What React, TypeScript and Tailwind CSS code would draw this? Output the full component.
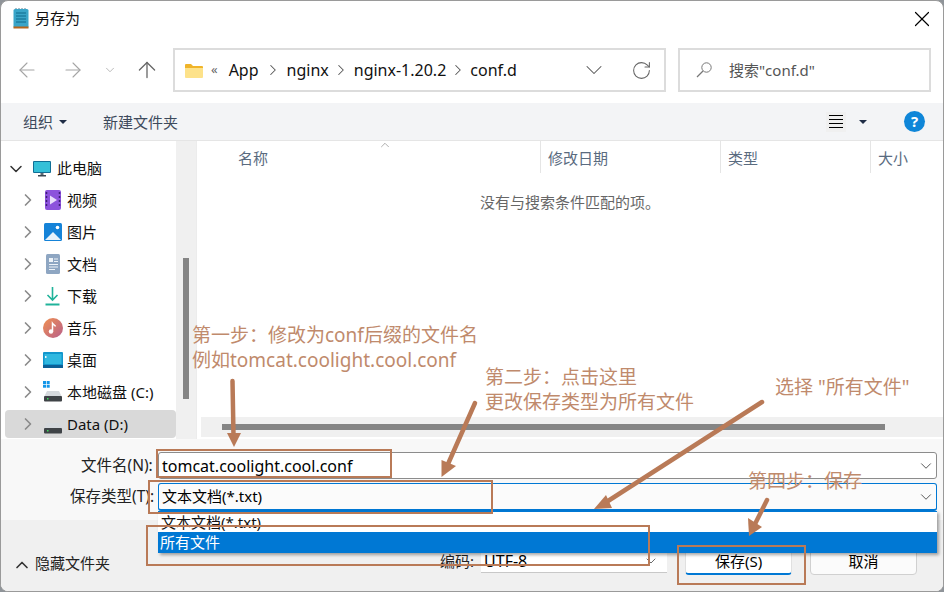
import { ArrowLeft, ArrowRight, ArrowUp, ChevronDown, ChevronRight, ChevronUp, RotateCw, X } from "lucide-react";
import type { ReactNode } from "react";

const font = { fontFamily: '"Noto Sans", "Noto Sans CJK SC", sans-serif' };

function NotepadIcon() {
  return (
    <svg width="16" height="21" viewBox="0 0 16 21">
      <rect x="0.5" y="1" width="15" height="19" rx="1.5" fill="#3aa5c8" />
      <rect x="0.5" y="18.5" width="15" height="2" fill="#b5651d" />
      <path d="M3 1V0M6 1V0M9 1V0M12 1V0" stroke="#5b7c8c" />
      <path d="M3 5h10M3 8h10M3 11h10M3 14h10" stroke="#0f6a8c" />
    </svg>
  );
}

function FolderIcon() {
  return (
    <svg width="18" height="15" viewBox="0 0 18 15">
      <path d="M0 2a1 1 0 0 1 1-1h5l2 2h9a1 1 0 0 1 1 1v10H0z" fill="#f0b429" />
      <path d="M0 5h18v9a1 1 0 0 1-1 1H1a1 1 0 0 1-1-1z" fill="#fde28a" />
    </svg>
  );
}

function SearchGlass() {
  return (
    <svg width="16" height="16" viewBox="0 0 16 16" fill="none" stroke="#777">
      <circle cx="10.5" cy="5.5" r="4.7" />
      <path d="M7 9L1 15" strokeWidth="1.2" />
    </svg>
  );
}

function PcIcon() {
  return (
    <svg width="18" height="16" viewBox="0 0 18 16">
      <rect x="0" y="0" width="18" height="12" rx="1" fill="#106f96" />
      <rect x="1" y="1" width="16" height="10" fill="#35c0d8" />
      <rect x="7.5" y="12" width="3" height="2" fill="#5e6b75" />
      <rect x="5" y="14" width="8" height="1.5" fill="#3b4650" />
    </svg>
  );
}

function VideoIcon() {
  return (
    <svg width="16" height="20" viewBox="0 0 16 20">
      <rect width="16" height="20" rx="2" fill="#8c52dc" />
      <path d="M5 5.5l7 4.5-7 4.5z" fill="#e8dcfb" />
      <path d="M1.5 2v16M14.5 2v16" stroke="#3e1e78" strokeWidth="1.5" strokeDasharray="2 2" />
    </svg>
  );
}

function PictureIcon() {
  return (
    <svg width="18" height="18" viewBox="0 0 18 18">
      <rect width="18" height="18" rx="1.5" fill="#1583d8" />
      <circle cx="13.5" cy="4.5" r="1.8" fill="#fff" />
      <path d="M1 17l8-8 8 8z" fill="#e6f2fb" />
    </svg>
  );
}

function DocIcon() {
  return (
    <svg width="14" height="20" viewBox="0 0 14 20">
      <rect width="14" height="20" rx="1.5" fill="#8ea6c2" />
      <rect x="3" y="4" width="4" height="4" fill="#eef3f8" />
      <path d="M8 5h4M8 7.5h4M3 10.5h9M3 13h9M3 15.5h6" stroke="#eef3f8" />
    </svg>
  );
}

function DownloadIcon() {
  return (
    <svg width="15" height="20" viewBox="0 0 15 20">
      <path d="M7.5 1v12M2.5 9l5 5 5-5" fill="none" stroke="#20b39a" strokeWidth="1.6" />
      <path d="M0.5 18.5h14" stroke="#20b39a" strokeWidth="2" />
    </svg>
  );
}

function MusicIcon() {
  return (
    <svg width="20" height="20" viewBox="0 0 20 20">
      <defs>
        <linearGradient id="music" x1="0" y1="0" x2="1" y2="1">
          <stop offset="0" stopColor="#f09050" />
          <stop offset="1" stopColor="#b8608c" />
        </linearGradient>
      </defs>
      <circle cx="10" cy="10" r="10" fill="url(#music)" />
      <circle cx="8" cy="13.5" r="2.2" fill="#fff" />
      <path d="M9.5 13.5V5.5c1 1.5 2.5 1.5 3 3" fill="none" stroke="#fff" strokeWidth="1.5" />
    </svg>
  );
}

function DesktopIcon() {
  return (
    <svg width="20" height="16" viewBox="0 0 20 16">
      <rect width="20" height="16" rx="1" fill="#1296cc" />
      <rect x="1.5" y="2" width="17" height="10" fill="#30b8e0" />
      <rect x="2" y="4" width="1.5" height="2" fill="#e8f7fc" />
      <rect y="13" width="20" height="3" fill="#0c5f96" />
    </svg>
  );
}

function DiskIcon({ windows }: { windows?: boolean }) {
  return (
    <svg width="20" height="22" viewBox="0 0 20 22">
      {windows && (
        <g fill="#1496e8">
          <rect x="0" y="0" width="3" height="3" />
          <rect x="3.7" y="0" width="3" height="3" />
          <rect x="0" y="3.7" width="3" height="3" />
          <rect x="3.7" y="3.7" width="3" height="3" />
        </g>
      )}
      <path d="M1 16l3-6h12l3 6z" fill="#d5d9dd" />
      <rect x="1" y="15" width="18" height="5.5" rx="1" fill="#3f4347" />
      <rect x="4" y="17" width="1.5" height="1.5" fill="#3ddc5c" />
    </svg>
  );
}

function NavRow({ icon, label, selected }: { icon: ReactNode; label: string; selected?: boolean }) {
  return (
    <div className={`flex items-center ${selected ? "ml-1 mt-0.5 h-7 rounded-sm bg-[#d9d9d9] pl-[13px]" : "h-8 pl-[17px]"}`}>
      <ChevronRight size={20} strokeWidth={2} className="text-[#8a8a8a]" />
      <span className="flex w-[29px] shrink-0 justify-center">{icon}</span>
      <span className="text-[15px] text-[#111]">{label}</span>
    </div>
  );
}

function Dropdown({ value, focused, big }: { value: string; focused?: boolean; big?: boolean }) {
  return (
    <div
      className={`flex items-center justify-between rounded-[3px] border pl-[3px] pr-[1px] ${
        focused ? "h-[28px] border-[#0078d4] border-b-2 bg-[#fbfbfb]" : "h-[27px] border-[#8c8c8c] bg-white"
      }`}
    >
      <span className={`${big ? "text-[16px]" : "text-[15px]"} text-black`}>{value}</span>
      <ChevronDown size={18} strokeWidth={1.3} className="text-[#555]" />
    </div>
  );
}

export default function App() {
  return (
    <div style={font} className="relative h-[592px] w-[944px] overflow-hidden bg-[#8f9499]">
      <div className="flex h-full w-full flex-col overflow-hidden rounded-lg border border-[#9a9a9a] bg-white">
        {/* title */}
        <div className="flex h-[35px] shrink-0 items-center pl-3">
          <NotepadIcon />
          <span className="ml-[6px] text-[15px] text-[#111]">另存为</span>
          <X size={26} strokeWidth={1.1} className="ml-auto mr-2 text-black" />
        </div>

        {/* nav */}
        <div className="flex h-[67px] shrink-0 items-start pt-3">
          <div className="flex h-11 w-[172px] items-center text-[#a5a5a5]">
            <ArrowLeft size={24} strokeWidth={1.1} className="ml-[14px]" />
            <ArrowRight size={24} strokeWidth={1.1} className="ml-[22px]" />
            <ChevronDown size={14} strokeWidth={1.3} className="ml-[18px]" />
            <ArrowUp size={26} strokeWidth={1.2} className="ml-[17px] text-[#666]" />
          </div>
          <div className="flex h-11 w-[493px] items-center border-2 border-[#dcdcdc] pl-[10px]">
            <FolderIcon />
            <span className="ml-2 text-[13px] text-[#666]">«</span>
            <span className="ml-[11px] text-[16px] text-[#111]">App</span>
            <ChevronRight size={18} strokeWidth={1.4} className="mx-[5px] text-[#555]" />
            <span className="text-[16px] text-[#111]">nginx</span>
            <ChevronRight size={18} strokeWidth={1.4} className="mx-[3.5px] text-[#555]" />
            <span className="text-[16px] text-[#111]">nginx-1.20.2</span>
            <ChevronRight size={18} strokeWidth={1.4} className="mx-[3px] text-[#555]" />
            <span className="text-[16px] text-[#111]">conf.d</span>
            <ChevronDown size={28} strokeWidth={0.9} className="ml-auto text-[#555]" />
            <RotateCw size={21} strokeWidth={1.2} className="ml-[23px] mr-3 text-[#666]" />
          </div>
          <div className="ml-3 flex h-11 w-[253px] items-center border-2 border-[#dcdcdc] pl-[16px]">
            <SearchGlass />
            <span className="ml-[17px] text-[15px] text-[#555]">搜索"conf.d"</span>
          </div>
        </div>

        {/* toolbar */}
        <div className="flex h-[38px] shrink-0 items-center border-b border-[#e5e5e5] bg-[#f3f4f6] pl-[22px] text-[15px] text-[#3d4a5c]">
          <span className="mt-[2px]">组织</span>
          <span className="ml-[6px] h-0 w-0 border-x-4 border-t-4 border-x-transparent border-t-[#1f2d46]" />
          <span className="ml-9 mt-[2px]">新建文件夹</span>
          <span className="ml-auto flex h-5 w-5 flex-col justify-between bg-[#f0f0f0] px-[3px] py-[3px]">
            <span className="h-px bg-black" />
            <span className="h-px bg-black" />
            <span className="h-px bg-black" />
            <span className="h-px bg-black" />
          </span>
          <span className="ml-[13px] h-0 w-0 border-x-4 border-t-4 border-x-transparent border-t-[#1f2d46]" />
          <span className="ml-[37px] mr-[18px] flex h-[21px] w-[21px] items-center justify-center rounded-full bg-[#0f86d8] text-[15px] font-bold text-white">
            ?
          </span>
        </div>

        {/* main */}
        <div className="flex h-[298px] shrink-0">
          <div className="w-[175px] shrink-0 pt-3">
            <div className="flex h-[31px] items-center pl-[5px]">
              <ChevronDown size={20} strokeWidth={1.8} className="text-[#333]" />
              <span className="ml-[7px] flex w-[18px]"><PcIcon /></span>
              <span className="ml-[6px] text-[15px] text-[#111]">此电脑</span>
            </div>
            <NavRow icon={<VideoIcon />} label="视频" />
            <NavRow icon={<PictureIcon />} label="图片" />
            <NavRow icon={<DocIcon />} label="文档" />
            <NavRow icon={<DownloadIcon />} label="下载" />
            <NavRow icon={<MusicIcon />} label="音乐" />
            <NavRow icon={<DesktopIcon />} label="桌面" />
            <NavRow icon={<DiskIcon windows />} label="本地磁盘 (C:)" />
            <NavRow icon={<DiskIcon />} label="Data (D:)" selected />
          </div>
          <div className="w-5 shrink-0 bg-[#f0f0f0] pl-[7px] pt-[117px]">
            <div className="h-[141px] w-[6px] bg-[#858585]" />
          </div>
          <div className="flex min-w-0 flex-1 flex-col border-l border-[#ececec] pl-1">
            <div className="relative flex h-[32px] shrink-0 text-[15px] text-[#5a6b7f]">
              <div className="w-[339px] pl-[37px] pt-[6px]">名称</div>
              <div className="w-[180px] border-l border-[#e5e5e5] pl-[7px] pt-[6px]">修改日期</div>
              <div className="w-[150px] border-l border-[#e5e5e5] pl-[7px] pt-[6px]">类型</div>
              <div className="border-l border-[#e5e5e5] pl-[7px] pt-[6px]">大小</div>
              <ChevronUp size={14} strokeWidth={1} className="absolute left-[177px] top-[-3px] text-[#777]" />
            </div>
            <div className="flex flex-1 justify-center pr-1 pt-[18px] text-[15px] text-[#666]">
              没有与搜索条件匹配的项。
            </div>
            <div className="mb-[2px] flex h-5 shrink-0 items-center bg-[#f0f0f0] pl-[21px]">
              <div className="h-[6px] w-[663px] bg-[#858585]" />
            </div>
          </div>
        </div>

        {/* fields */}
        <div className="flex h-[81px] shrink-0 flex-col gap-1 bg-[#f8f8f8] pl-[80px] pr-[6px] pt-[13px]">
          <div className="flex items-center">
            <span className="w-[77px] text-[15.5px] text-[#222]">文件名(N):</span>
            <div className="flex-1"><Dropdown value="tomcat.coolight.cool.conf" big /></div>
          </div>
          <div className="-ml-[11px] flex items-center">
            <span className="w-[88px] text-[15.5px] text-[#222]">保存类型(T):</span>
            <div className="flex-1"><Dropdown value="文本文档(*.txt)" focused /></div>
          </div>
        </div>

        {/* bottom bar */}
        <div className="flex flex-1 items-center bg-[#f0f0f0] pl-[11px] pt-3">
          <ChevronUp size={20} strokeWidth={2} className="mt-[6px] text-[#333]" />
          <span className="ml-[3px] mt-1 text-[15px] text-[#222]">隐藏文件夹</span>
          <span className="ml-[330px] text-[15px] text-[#222]">编码:</span>
          <div className="ml-[7px] flex h-[23px] w-[186px] items-center justify-between border-b border-[#c8c8c8] bg-white pl-[3px] pr-2">
            <span className="text-[16px] text-black">UTF-8</span>
            <ChevronDown size={16} strokeWidth={1.3} className="text-[#555]" />
          </div>
          <div className="ml-[18px] flex h-[27px] w-[107px] items-center justify-center rounded-[4px] border border-[#e0e0e0] border-b-2 border-b-[#0078d4] bg-white text-[15px] text-black">
            保存(S)
          </div>
          <div className="ml-[18px] flex h-[27px] w-[107px] items-center justify-center rounded-[4px] border border-[#d0d0d0] bg-[#fbfbfb] text-[15px] text-black">
            取消
          </div>
        </div>
      </div>

      {/* open dropdown list */}
      <div className="absolute left-[158px] top-[511px] w-[779px] border-t border-[#0078d4] bg-white text-[15px] shadow-[2px_2px_3px_rgba(0,0,0,0.35)]">
        <div className="flex h-[20px] items-center pl-[3px] text-[#111]">文本文档(*.txt)</div>
        <div className="flex h-[21px] items-center bg-[#0078d4] pl-[2px] text-white">所有文件</div>
      </div>

      {/* annotations */}
      <svg className="absolute inset-0" width="944" height="592" viewBox="0 0 944 592" fill="none">
        <g stroke="#b97a57" strokeWidth="2">
          <rect x="157" y="450" width="234" height="27" />
          <rect x="149" y="481" width="343" height="32" />
          <rect x="147" y="526" width="502" height="39" />
          <rect x="678" y="546" width="127" height="38" />
        </g>
        <g stroke="#b97a57" strokeWidth="4.5" strokeLinecap="round">
          <path d="M232.5 381L233.5 436" />
          <path d="M475 403L448 464" />
          <path d="M762 402L608 501" />
          <path d="M767 500L755 524" />
        </g>
        <g fill="#b97a57">
          <path d="M234 447L227 433H241z" />
          <path d="M441.5 477L441.5 460L456 466z" />
          <path d="M594 509L606 495L612 508z" />
          <path d="M749 536L748 518L762 527z" />
        </g>
      </svg>
      <div className="absolute left-[192px] top-[323px] text-[19px] leading-[25px] text-[#c08a6c]">
        <div>第一步：修改为conf后缀的文件名</div>
        <div>例如tomcat.coolight.cool.conf</div>
      </div>
      <div className="absolute left-[485px] top-[365px] text-[19px] leading-[25px] text-[#c08a6c]">
        <div>第二步：点击这里</div>
        <div>更改保存类型为所有文件</div>
      </div>
      <div className="absolute left-[775px] top-[375px] text-[19px] leading-[25px] text-[#c08a6c]">选择 "所有文件"</div>
      <div className="absolute left-[748px] top-[469px] text-[19px] leading-[25px] text-[#c08a6c]">第四步：保存</div>
    </div>
  );
}
